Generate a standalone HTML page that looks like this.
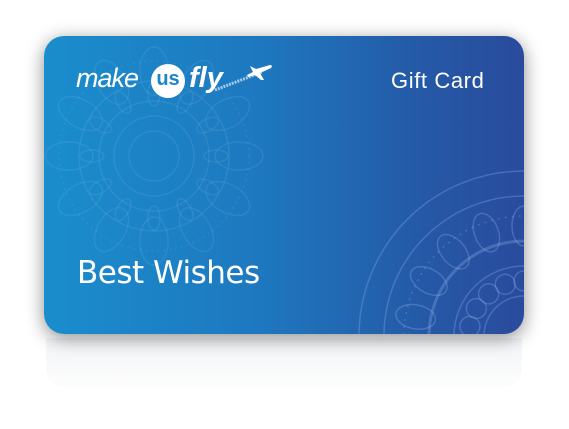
<!DOCTYPE html>
<html><head><meta charset="utf-8"><style>
html,body{margin:0;padding:0;background:#fff;width:569px;height:429px;overflow:hidden;position:relative}
.card{position:absolute;left:44px;top:36px;width:480px;height:298px;border-radius:20px;overflow:hidden;
background:linear-gradient(90deg,#1a8dcc 0%,#1e78bf 45%,#2558a6 80%,#2a4b9d 100%);
box-shadow:0 4px 18px rgba(0,0,0,.45)}
.refl{position:absolute;left:46px;top:338px;width:476px;height:50px;border-radius:0 0 20px 20px;
background:linear-gradient(180deg,#f3f5f8,#fdfdfd);}
.t{position:absolute;color:#fff;font-family:"Liberation Sans",sans-serif;white-space:nowrap}
</style></head><body>
<div class="refl"></div>
<div class="card">
<svg width="480" height="298" style="position:absolute;left:0;top:0" fill="none" stroke="rgba(160,200,240,0.13)" stroke-width="1.5">
<g transform="translate(110,120)">
<circle r="25"/><circle r="40"/><circle r="55"/><circle r="75"/><circle r="95" stroke-dasharray="2 4"/>
<g id="p"><ellipse cx="0" cy="-85" rx="14" ry="24"/><ellipse cx="0" cy="-62" rx="6" ry="12"/></g>
<use href="#p" transform="rotate(30)"/><use href="#p" transform="rotate(60)"/><use href="#p" transform="rotate(90)"/><use href="#p" transform="rotate(120)"/><use href="#p" transform="rotate(150)"/><use href="#p" transform="rotate(180)"/><use href="#p" transform="rotate(210)"/><use href="#p" transform="rotate(240)"/><use href="#p" transform="rotate(270)"/><use href="#p" transform="rotate(300)"/><use href="#p" transform="rotate(330)"/>
</g>
<g transform="translate(480,300)" stroke="rgba(150,180,235,0.3)">
<circle r="40"/><circle r="70"/><circle r="95" stroke-width="3"/><circle r="120" stroke-dasharray="2 5"/><circle r="140"/><circle r="165"/>
<g id="q"><ellipse cx="0" cy="-110" rx="12" ry="20"/><circle cx="0" cy="-55" r="10"/></g>
<use href="#q" transform="rotate(-20)"/><use href="#q" transform="rotate(-40)"/><use href="#q" transform="rotate(-60)"/><use href="#q" transform="rotate(-80)"/>
</g>
</svg>
</div>
<div class="t" style="left:76px;top:63px;font-size:27px;font-style:italic;letter-spacing:-1px">make</div>
<div style="position:absolute;left:151px;top:64px;width:34px;height:34px;border-radius:50%;background:#fff;color:#1d84c6;font:bold 20px 'Liberation Sans',sans-serif;text-align:center;line-height:31px">us</div>
<div class="t" style="left:189px;top:62px;font-size:29px;font-style:italic;font-weight:bold">fly</div>
<svg style="position:absolute;left:200px;top:60px" width="75" height="35"><path d="M15 30 L62 12" stroke="rgba(255,255,255,.6)" stroke-width="3" stroke-dasharray="2 1"/><path d="M56 9 L70 5 Q73 5 71 8 L60 13 L64 20 L61 20 L55 15 L48 17 L47 15 L53 12 L50 6 Z" fill="#fff"/></svg>
<div class="t" style="left:391px;top:68px;font-size:22px;letter-spacing:0.6px">Gift Card</div>
<div class="t" style="left:77px;top:255px;font-size:31px;font-family:'DejaVu Sans',sans-serif;letter-spacing:-0.5px">Best Wishes</div>
</body></html>
